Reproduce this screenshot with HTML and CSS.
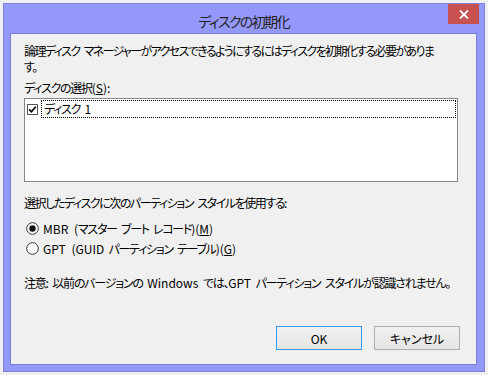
FILE: index.html
```html
<!DOCTYPE html>
<html lang="ja">
<head>
<meta charset="utf-8">
<title>ディスクの初期化</title>
<link rel="stylesheet" href="styles.css">
</head>
<body>
<div class="window">
  <div class="titlebar">
    <span></span>
    <span class="title">ディスクの初期化</span>
    <button class="close" aria-label="閉じる">
      <svg width="10" height="9" viewBox="0 0 10 9"><path d="M1 0.5 L9 8.5 M9 0.5 L1 8.5" stroke="#fff" stroke-width="1.8" fill="none"/></svg>
    </button>
  </div>
  <div class="client">
    <p class="intro">論理ディスク マネージャーがアクセスできるようにするにはディスクを初期化する必要がありま<br>す。</p>
    <p class="label">ディスクの選択<span class="en">(<u>S</u>):</span></p>
    <div class="listbox">
      <div class="item">
        <svg class="check" width="11" height="11" viewBox="0 0 11 11"><rect x="0.5" y="0.5" width="10" height="10" fill="#fff" stroke="#555"/><path d="M2.2 5.4 L4.4 7.8 L8.8 2.8" stroke="#000" stroke-width="1.7" fill="none"/></svg>
        <span class="itemtext">ディスク <span class="en">1</span></span>
      </div>
    </div>
    <p class="label section">選択したディスクに次のパーティション スタイルを使用する:</p>
    <div class="radios">
      <div class="radio">
        <svg width="13" height="13" viewBox="0 0 13 13"><circle cx="6.5" cy="6.5" r="5.8" fill="#fff" stroke="#333"/><circle cx="6.5" cy="6.5" r="3.2" fill="#111"/></svg>
        <span><span class="en">MBR (</span>マスター ブート レコード<span class="en">)(<u>M</u>)</span></span>
      </div>
      <div class="radio">
        <svg width="13" height="13" viewBox="0 0 13 13"><circle cx="6.5" cy="6.5" r="5.8" fill="#fff" stroke="#333"/></svg>
        <span><span class="en">GPT (GUID</span> パーティション テーブル<span class="en">)(<u>G</u>)</span></span>
      </div>
    </div>
    <p class="note">注意: 以前のバージョンの <span class="en">Windows</span> では、<span class="en">GPT</span> パーティション スタイルが認識されません。</p>
    <div class="buttons">
      <button class="btn default">OK</button>
      <button class="btn">キャンセル</button>
    </div>
  </div>
</div>
</body>
</html>
```

FILE: styles.css
```css
* { box-sizing: border-box; }
html, body {
  margin: 0;
  padding: 0;
  background: #f0f0f0;
  width: 488px;
  height: 375px;
  overflow: hidden;
}
body {
  font-family: "Noto Sans CJK JP", "Noto Sans", sans-serif;
  font-feature-settings: "palt";
  font-size: 12px;
  letter-spacing: -1.3px;
  word-spacing: 3px;
  color: #000;
}
.en { letter-spacing: 0; }
.window {
  margin: 3px 0 0 3px;
  width: 482px;
  height: 369px;
  background: #9598fb;
  border: 1px solid #7d81dc;
  padding: 0 7px 6px 6px;
  display: flex;
  flex-direction: column;
}
.titlebar {
  height: 29px;
  display: grid;
  grid-template-columns: 1fr auto 1fr;
  align-items: start;
}
.title {
  font-size: 14px;
  line-height: 18px;
  padding-top: 8px;
  color: #222;
  letter-spacing: -1.6px;
}
.close {
  justify-self: end;
  margin-right: -2px;
  width: 31px;
  height: 20px;
  border: 0;
  padding: 0;
  background: #c75050;
  display: flex;
  align-items: center;
  justify-content: center;
}
.client {
  flex: 1;
  background: #f0f0f0;
  border: 1px solid #7a7ed6;
  padding: 9px 16px 14px 13px;
  display: flex;
  flex-direction: column;
}
p { margin: 0; line-height: 15px; white-space: nowrap; }
.intro { letter-spacing: -1.62px; line-height: 16px; }
.label { margin-top: 5px; }
.listbox {
  margin-top: 3px;
  width: 434px;
  height: 84px;
  background: #fff;
  border: 1px solid #828790;
  padding: 1px 1px 0 1px;
}
.item {
  display: flex;
  align-items: center;
  height: 18px;
}
.check { margin-left: 1px; margin-right: 3px; flex: none; }
.itemtext {
  flex: 1;
  height: 18px;
  line-height: 16px;
  border: 1px dotted #000;
  padding-left: 2px;
}
.section { margin-top: 13px; letter-spacing: -1.45px; }
.radios { margin-top: 8px; }
.radio {
  height: 20px;
  display: flex;
  align-items: center;
  gap: 4px;
  padding-left: 2px;
}
.radio svg { flex: none; }
.note { margin-top: 17px; letter-spacing: -1.2px; }
.buttons {
  margin-top: auto;
  display: flex;
  justify-content: flex-end;
  gap: 12px;
}
.btn {
  width: 86px;
  height: 24px;
  font: inherit;
  font-size: 12px;
  letter-spacing: 0;
  word-spacing: 0;
  color: #000;
  background: linear-gradient(#f0f0f0, #e5e5e5);
  border: 1px solid #adadad;
  padding: 0;
}
.btn.default { border-color: #3399ff; }
```
